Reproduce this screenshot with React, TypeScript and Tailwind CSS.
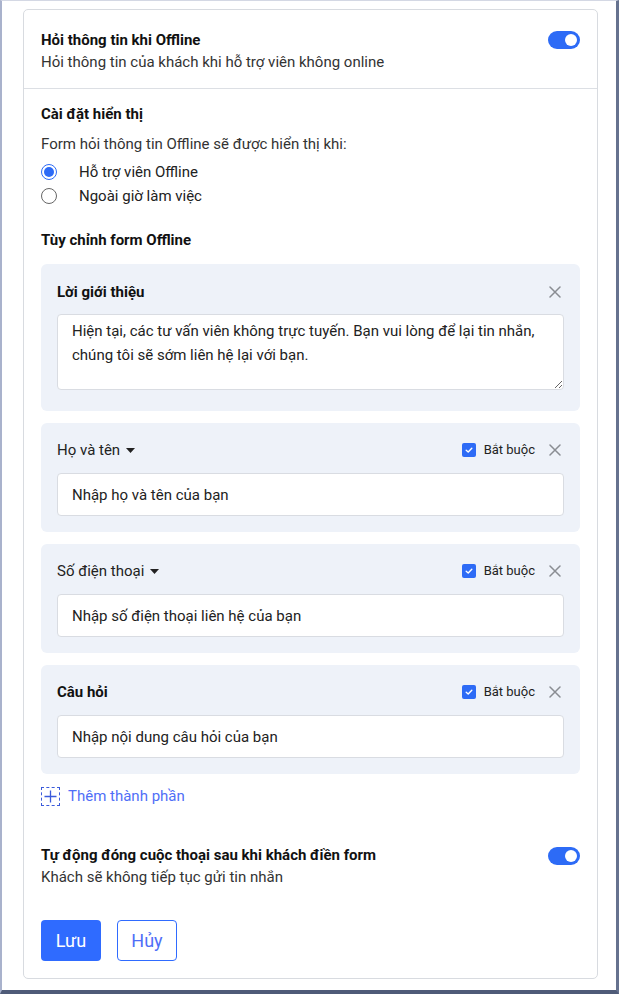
import React, { useState } from "react";

const FONT = { fontFamily: "Roboto, 'Noto Sans', sans-serif" };

function Toggle({ on = true }: { on?: boolean }) {
    return (
        <div
            className={`w-8 h-[18px] rounded-full flex items-center px-[3px] shrink-0 ${
                on ? "bg-[#2d6bf6] justify-end" : "bg-gray-300 justify-start"
            }`}
        >
            <div className="w-3 h-3 rounded-full bg-white" />
        </div>
    );
}

function CloseIcon() {
    return (
        <svg width="12" height="12" viewBox="0 0 12 12" className="shrink-0">
            <path d="M1 1L11 11M11 1L1 11" stroke="#8a8d93" strokeWidth="1.5" strokeLinecap="round" />
        </svg>
    );
}

function Required() {
    return (
        <div className="flex items-center gap-2">
            <div className="w-[14px] h-[14px] rounded-[2px] bg-[#2d6bf6] flex items-center justify-center">
                <svg width="10" height="10" viewBox="0 0 10 10">
                    <path d="M2.2 5.2L4.2 7L7.8 3.2" stroke="white" strokeWidth="1.4" fill="none" strokeLinecap="round" strokeLinejoin="round" />
                </svg>
            </div>
            <span className="text-[13px] text-[#222]">Bắt buộc</span>
        </div>
    );
}

interface FieldProps {
    label: string;
    value: string;
    dropdown?: boolean;
}

function FieldPanel({ label, value, dropdown }: FieldProps) {
    return (
        <div className="bg-[#eef2f9] rounded-md px-4 pt-4 pb-4">
            <div className="flex items-center justify-between h-[22px]">
                {dropdown ? (
                    <div className="flex items-center gap-[6px] text-[15px] text-[#222]">
                        {label}
                        <svg width="9" height="5" viewBox="0 0 9 5">
                            <path d="M0 0H9L4.5 5Z" fill="#222" />
                        </svg>
                    </div>
                ) : (
                    <div className="text-[15px] font-bold text-[#111]">{label}</div>
                )}
                <div className="flex items-center gap-[14px] pr-[3px]">
                    <Required />
                    <CloseIcon />
                </div>
            </div>
            <div className="mt-3 h-[43px] bg-white border border-[#d9dce2] rounded-[4px] flex items-center px-[14px] text-[15px] text-[#222]">
                {value}
            </div>
        </div>
    );
}

export default function App() {
    const [choice, setChoice] = useState(0);

    return (
        <div
            className="w-[619px] h-[994px] bg-white border-l-2 border-t border-r-[3px] border-b-4 border-l-[#a9b2cc] border-t-[#d4d8e4] border-r-[#66728f] border-b-[#4f5b78] pt-2 pl-[21px] pr-[18px]"
            style={FONT}
        >
            <div className="h-[970px] border border-[#d8dbe0] rounded-[5px] text-[#222]">
                {/* Header */}
                <div className="px-[17px] pt-[19px] pb-[15px] border-b border-[#dcdfe4] flex justify-between">
                    <div className="leading-[22px]">
                        <div className="text-[15px] font-bold text-[#111]">Hỏi thông tin khi Offline</div>
                        <div className="text-[15px] text-[#333]">Hỏi thông tin của khách khi hỗ trợ viên không online</div>
                    </div>
                    <div className="pt-[2px]">
                        <Toggle />
                    </div>
                </div>

                <div className="px-[17px] pt-[14px] leading-[22px]">
                    <div className="text-[15px] font-bold text-[#111]">Cài đặt hiển thị</div>
                    <div className="mt-2 text-[15px] text-[#333]">Form hỏi thông tin Offline sẽ được hiển thị khi:</div>
                    <div className="mt-[5px] flex flex-col">
                        {["Hỗ trợ viên Offline", "Ngoài giờ làm việc"].map((opt, i) => (
                            <label
                                key={opt}
                                className="h-6 flex items-center cursor-pointer"
                                onClick={() => setChoice(i)}
                            >
                                <span
                                    className={`w-4 h-4 rounded-full border flex items-center justify-center ${
                                        choice === i ? "border-[#2d6bf6]" : "border-[#666]"
                                    }`}
                                >
                                    {choice === i && <span className="w-[10px] h-[10px] rounded-full bg-[#2d6bf6]" />}
                                </span>
                                <span className="ml-[22px] text-[15px] text-[#222]">{opt}</span>
                            </label>
                        ))}
                    </div>

                    <div className="mt-[21px] text-[15px] font-bold text-[#111]">Tùy chỉnh form Offline</div>

                    <div className="mt-[13px] flex flex-col gap-3">
                        <div className="bg-[#eef2f9] rounded-md px-4 pt-[17px] pb-[21px]">
                            <div className="flex items-center justify-between h-[22px]">
                                <div className="text-[15px] font-bold text-[#111]">Lời giới thiệu</div>
                                <div className="pr-[3px]">
                                    <CloseIcon />
                                </div>
                            </div>
                            <textarea
                                className="mt-[11px] block w-full h-[76px] bg-white border border-[#d9dce2] rounded-[4px] px-[14px] py-[4px] text-[15px] leading-6 text-[#222] resize-y outline-none"
                                defaultValue="Hiện tại, các tư vấn viên không trực tuyến. Bạn vui lòng để lại tin nhắn, chúng tôi sẽ sớm liên hệ lại với bạn."
                            />
                        </div>
                        <FieldPanel label="Họ và tên" value="Nhập họ và tên của bạn" dropdown />
                        <FieldPanel label="Số điện thoại" value="Nhập số điện thoại liên hệ của bạn" dropdown />
                        <FieldPanel label="Câu hỏi" value="Nhập nội dung câu hỏi của bạn" />
                    </div>

                    <div className="mt-[11px] flex items-center gap-2">
                        <div className="w-[19px] h-[19px] border border-dashed border-[#3b5bdb] flex items-center justify-center">
                            <svg width="13" height="13" viewBox="0 0 13 13">
                                <path d="M6.5 0.5V12.5M0.5 6.5H12.5" stroke="#3b5bdb" strokeWidth="1.3" />
                            </svg>
                        </div>
                        <span className="text-[15px] text-[#4f6ef7]">Thêm thành phần</span>
                    </div>

                    <div className="mt-[37px] flex justify-between">
                        <div>
                            <div className="text-[15px] font-bold text-[#111]">Tự động đóng cuộc thoại sau khi khách điền form</div>
                            <div className="text-[15px] text-[#333]">Khách sẽ không tiếp tục gửi tin nhắn</div>
                        </div>
                        <div className="pt-[3px]">
                            <Toggle />
                        </div>
                    </div>

                    <div className="mt-[32px] flex gap-4">
                        <button className="w-[60px] h-[41px] rounded-[4px] bg-[#2f6bff] text-white text-[18px]">Lưu</button>
                        <button className="w-[60px] h-[41px] rounded-[4px] border border-[#2f6bff] bg-white text-[#4f6ef7] text-[18px]">Hủy</button>
                    </div>
                </div>
            </div>
        </div>
    );
}
